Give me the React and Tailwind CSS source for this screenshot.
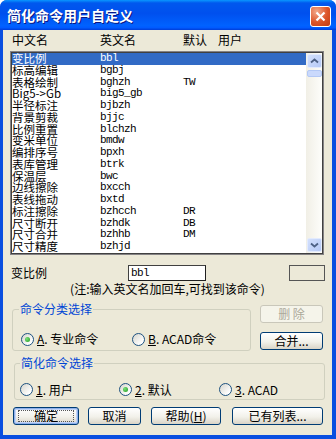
import React from 'react'

const rows = [
  ['变比例', 'bbl', ''],
  ['标高编辑', 'bgbj', ''],
  ['表格绘制', 'bghzh', 'TW'],
  ['Big5->Gb', 'big5_gb', ''],
  ['半径标注', 'bjbzh', ''],
  ['背景剪裁', 'bjjc', ''],
  ['比例重置', 'blchzh', ''],
  ['变米单位', 'bmdw', ''],
  ['编排序号', 'bpxh', ''],
  ['表库管理', 'btrk', ''],
  ['保温层', 'bwc', ''],
  ['边线擦除', 'bxcch', ''],
  ['表线拖动', 'bxtd', ''],
  ['标注擦除', 'bzhcch', 'DR'],
  ['尺寸断开', 'bzhdk', 'DB'],
  ['尺寸合并', 'bzhhb', 'DM'],
  ['尺寸精度', 'bzhjd', ''],
]

const mono = "font-['Liberation_Mono',monospace]"

const Radio = ({ checked, children, className = '' }) => (
  <div className={`flex items-center ${className}`}>
    <span className="w-[13px] h-[13px] shrink-0 rounded-full border border-[#1c5180] bg-[linear-gradient(135deg,#d6d5cc,#ffffff_80%)] flex items-center justify-center">
      {checked && <span className="w-[5px] h-[5px] rounded-full bg-[radial-gradient(circle_at_35%_35%,#7be07b,#1e9a1e)]" />}
    </span>
    <span className="ml-[3px] leading-[14px]">{children}</span>
  </div>
)

const Btn = ({ children, className = '', disabled, def }) => (
  <div
    className={`h-[18px] flex items-center justify-center rounded-[3px] border whitespace-nowrap ${
      disabled
        ? 'border-[#c9c7ba] bg-[#f5f4ea] text-[#aca899]'
        : 'border-[#003c74] bg-[linear-gradient(to_bottom,#ffffff,#f2f1ea_55%,#d9d4c7)] text-black'
    } ${def ? 'shadow-[inset_0_0_0_1px_#8fb0ea,inset_0_0_0_2px_#c2d4f7]' : ''} ${className}`}
  >
    {def ? (
      <span className="w-[56px] h-[12px] flex items-center justify-center border border-dotted border-[#555] leading-[12px]">{children}</span>
    ) : (
      <span className="leading-[14px]">{children}</span>
    )}
  </div>
)

const ScrollBtn = ({ down }) => (
  <div className="w-[15px] h-[14px] mx-auto rounded-[2px] border border-[#e3ebfd] bg-[linear-gradient(135deg,#d3e0fd,#b5c9f6)] flex items-center justify-center">
    <svg width="9" height="6" viewBox="0 0 9 6">
      <path d={down ? 'M1 1.5L4.5 4.5L8 1.5' : 'M1 4.5L4.5 1.5L8 4.5'} fill="none" stroke="#4d6185" strokeWidth="1.8" />
    </svg>
  </div>
)

export default function App() {
  return (
    <div className="w-[336px] h-[439px] flex flex-col rounded-t-[7px] overflow-hidden bg-[#0a4fe0] font-['Noto_Sans_CJK_SC',sans-serif]">
      <div className="h-[30px] shrink-0 flex items-center pl-[7px] pr-[5px] bg-[linear-gradient(to_bottom,#0997ff_0%,#0058ee_10%,#0050ee_45%,#0062ff_85%,#005bff_92%,#003dd7_100%)]">
        <span className="text-white font-bold text-[14px] leading-[18px] [text-shadow:1px_1px_#0a1883]">简化命令用户自定义</span>
        <div className="ml-auto mt-[3px] w-[21px] h-[21px] rounded-[3px] border border-white bg-[radial-gradient(circle_at_30%_25%,#f3a98c,#dc5428_55%,#c23b12)] flex items-center justify-center">
          <svg width="11" height="11" viewBox="0 0 11 11">
            <path d="M1.5 1.5L9.5 9.5M9.5 1.5L1.5 9.5" stroke="white" strokeWidth="2.2" />
          </svg>
        </div>
      </div>

      <div className="flex-1 ml-[3px] mr-[4px] mb-[4px] bg-[#ece9d8] flex flex-col text-[12px] leading-[14px] text-black">
        <div className="mt-[3px] ml-[9px] h-[14px] grid grid-cols-[88px_83px_35px_auto]">
          <span>中文名</span>
          <span>英文名</span>
          <span>默认</span>
          <span>用户</span>
        </div>

        <div className="mt-[4px] ml-[7px] w-[314px] h-[204px] border border-[#848284]">
          <div className="h-full border border-[#404040] flex bg-white">
            <div className="flex-1 overflow-hidden">
              {rows.map(([cn, en, def], i) => (
                <div
                  key={en}
                  className={`h-[11.75px] leading-[11.75px] text-[11.5px] grid grid-cols-[88px_83px_35px_auto] whitespace-nowrap ${
                    i === 0 ? 'bg-[#316ac5] text-white' : ''
                  }`}
                >
                  <span>{cn}</span>
                  <span className={`${mono} text-[11px] tracking-[-0.6px]`}>{en}</span>
                  <span className={`${mono} text-[11px] tracking-[-0.6px]`}>{def}</span>
                  <span />
                </div>
              ))}
            </div>
            <div className="w-[16px] flex flex-col py-[1px] bg-[linear-gradient(to_right,#f1efe6,#fdfdfa)]">
              <ScrollBtn />
              <div className="mt-[2px] mx-auto w-[15px] h-[7px] rounded-[2px] border border-[#b3c8f5] bg-[#cad9fc]" />
              <div className="flex-1" />
              <ScrollBtn down />
            </div>
          </div>
        </div>

        <div className="mt-[10px] h-[16px] flex items-center">
          <span className="ml-[8px] w-[117px]">变比例</span>
          <div className={`w-[78px] h-[16px] bg-white border border-t-[#404040] border-l-[#404040] border-r-[#202020] border-b-[#202020] pl-[2px] leading-[14px] ${mono} text-[11px] tracking-[-0.6px]`}>
            bbl
          </div>
          <div className="ml-auto mr-[7px] w-[36px] h-[16px] border border-[#555]" />
        </div>

        <div className="mt-[2px] h-[12px] leading-[12px] text-center">(注:输入英文名加回车,可找到该命令)</div>

        <div className="mt-[7px] flex">
          <div className="ml-[9px] w-[239px] relative pt-[7px]">
            <span className="absolute top-0 left-[7px] px-[1px] bg-[#ece9d8] text-[#0046d5]">命令分类选择</span>
            <div className="h-[42px] rounded-[3px] border border-[#d0d0bf] pt-[18px] pl-[8px] flex">
              <Radio checked className="w-[111px]">
                <u>A</u>. 专业命令
              </Radio>
              <Radio>
                <u>B</u>. ACAD命令
              </Radio>
            </div>
          </div>
          <div className="ml-[9px] w-[63px] flex flex-col">
            <Btn disabled className="mt-[3px]">删 除</Btn>
            <Btn className="mt-[9px]">合并...</Btn>
          </div>
        </div>

        <div className="mt-[5px] ml-[11px] w-[311px] relative pt-[7px]">
          <span className="absolute top-0 left-[6px] px-[1px] bg-[#ece9d8] text-[#0046d5]">简化命令选择</span>
          <div className="h-[37px] rounded-[3px] border border-[#d0d0bf] pt-[16px] pl-[5px] flex">
            <Radio className="w-[99px]">
              <u>1</u>. 用户
            </Radio>
            <Radio checked className="w-[100px]">
              <u>2</u>. 默认
            </Radio>
            <Radio>
              <u>3</u>. ACAD
            </Radio>
          </div>
        </div>

        <div className="mt-[7px] ml-[10px] flex">
          <Btn def className="w-[66px]">确定</Btn>
          <Btn className="ml-[9px] w-[53px]">取消</Btn>
          <Btn className="ml-[10px] w-[70px]">
            帮助(<u>H</u>)
          </Btn>
          <Btn className="ml-[11px] w-[91px]">已有列表...</Btn>
        </div>
      </div>
    </div>
  )
}
